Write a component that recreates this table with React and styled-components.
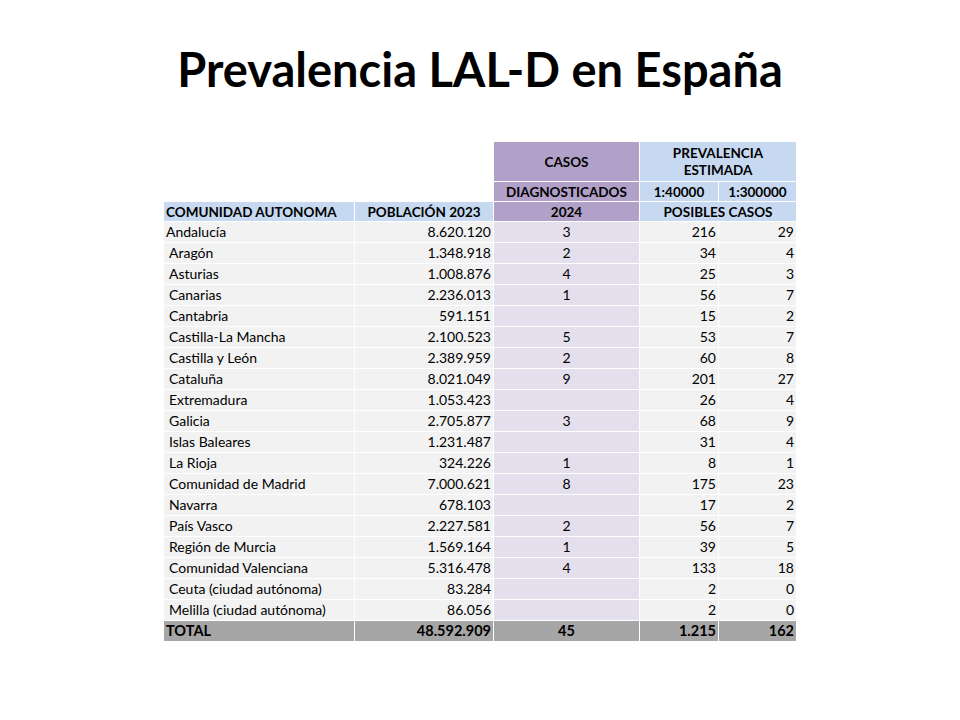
import React from "react";
import styled, { createGlobalStyle } from "styled-components";

const GlobalStyle = createGlobalStyle`
  html, body {
    margin: 0;
    padding: 0;
    background: #ffffff;
  }
  body {
    font-family: Lato, "Open Sans", "Liberation Sans", sans-serif;
    color: #000;
  }
`;

const Slide = {
  Wrapper: styled.div`
    width: 960px;
    height: 720px;
    display: flex;
    flex-direction: column;
    align-items: center;
    box-sizing: border-box;
    padding-top: 37px;
  `,
  Title: styled.h1`
    margin: 0;
    font-family: Lato, "Open Sans", sans-serif;
    font-weight: 700;
    font-size: 47px;
    line-height: 64px;
    letter-spacing: 0;
  `,
  Table: styled.table`
    margin-top: 40px;
    border-collapse: collapse;
    table-layout: fixed;
    font-size: 14px;
  `,
};

const bg = {
  none: "transparent",
  blue: "#c6d9f0",
  purple: "#b1a0c7",
  lavender: "#e4dfec",
  gray: "#f2f2f2",
  total: "#a6a6a6",
};

const Cell = styled.td`
  border: 1px solid #ffffff;
  padding: 0 2px 0 ${(p) => (p.$indent ? "5px" : "2px")};
  height: ${(p) => p.$h || 20}px;
  line-height: ${(p) => p.$lh || 14}px;
  background: ${(p) => bg[p.$bg || "gray"]};
  text-align: ${(p) => p.$align || "left"};
  font-weight: ${(p) => (p.$bold ? 700 : 400)};
  font-size: ${(p) => p.$size || 14}px;
  white-space: nowrap;
  vertical-align: middle;
  box-sizing: border-box;
`;

const Head = (props) => <Cell $bold $size={13.5} {...props} />;

const rows = [
  ["Andalucía", "8.620.120", "3", "216", "29", false],
  ["Aragón", "1.348.918", "2", "34", "4", true],
  ["Asturias", "1.008.876", "4", "25", "3", true],
  ["Canarias", "2.236.013", "1", "56", "7", true],
  ["Cantabria", "591.151", "", "15", "2", true],
  ["Castilla-La Mancha", "2.100.523", "5", "53", "7", true],
  ["Castilla y León", "2.389.959", "2", "60", "8", true],
  ["Cataluña", "8.021.049", "9", "201", "27", true],
  ["Extremadura", "1.053.423", "", "26", "4", true],
  ["Galicia", "2.705.877", "3", "68", "9", true],
  ["Islas Baleares", "1.231.487", "", "31", "4", true],
  ["La Rioja", "324.226", "1", "8", "1", true],
  ["Comunidad de Madrid", "7.000.621", "8", "175", "23", true],
  ["Navarra", "678.103", "", "17", "2", true],
  ["País Vasco", "2.227.581", "2", "56", "7", true],
  ["Región de Murcia", "1.569.164", "1", "39", "5", true],
  ["Comunidad Valenciana", "5.316.478", "4", "133", "18", true],
  ["Ceuta (ciudad autónoma)", "83.284", "", "2", "0", true],
  ["Melilla (ciudad autónoma)", "86.056", "", "2", "0", true],
];

export default function App() {
  return (
    <>
      <GlobalStyle />
      <Slide.Wrapper>
        <Slide.Title>Prevalencia LAL-D en España</Slide.Title>
        <Slide.Table>
          <colgroup>
            <col style={{ width: 191 }} />
            <col style={{ width: 139 }} />
            <col style={{ width: 146 }} />
            <col style={{ width: 79 }} />
            <col style={{ width: 78 }} />
          </colgroup>
          <tbody>
            <tr>
              <Cell $bg="none" $h={40} />
              <Cell $bg="none" $h={40} />
              <Head $bg="purple" $h={40} $align="center">
                CASOS
              </Head>
              <Head $bg="blue" $h={40} $lh={17} $align="center" colSpan={2}>
                PREVALENCIA
                <br />
                ESTIMADA
              </Head>
            </tr>
            <tr>
              <Cell $bg="none" />
              <Cell $bg="none" />
              <Head $bg="purple" $align="center">
                DIAGNOSTICADOS
              </Head>
              <Head $bg="blue" $align="center">
                1:40000
              </Head>
              <Head $bg="blue" $align="center">
                1:300000
              </Head>
            </tr>
            <tr>
              <Head $bg="blue">COMUNIDAD AUTONOMA</Head>
              <Head $bg="blue" $align="center">
                POBLACIÓN 2023
              </Head>
              <Head $bg="purple" $align="center">
                2024
              </Head>
              <Head $bg="blue" $align="center" colSpan={2}>
                POSIBLES CASOS
              </Head>
            </tr>
            {rows.map(([name, pop, cases, p1, p2, indent]) => (
              <tr key={name}>
                <Cell $h={21} $indent={indent}>
                  {name}
                </Cell>
                <Cell $h={21} $align="right">
                  {pop}
                </Cell>
                <Cell $h={21} $bg="lavender" $align="center">
                  {cases}
                </Cell>
                <Cell $h={21} $align="right">
                  {p1}
                </Cell>
                <Cell $h={21} $align="right">
                  {p2}
                </Cell>
              </tr>
            ))}
            <tr>
              <Cell $h={21} $bg="total" $bold $size={14.5}>
                TOTAL
              </Cell>
              <Cell $h={21} $bg="total" $align="right" $bold $size={14.5}>
                48.592.909
              </Cell>
              <Cell $h={21} $bg="total" $align="center" $bold $size={14.5}>
                45
              </Cell>
              <Cell $h={21} $bg="total" $align="right" $bold $size={14.5}>
                1.215
              </Cell>
              <Cell $h={21} $bg="total" $align="right" $bold $size={14.5}>
                162
              </Cell>
            </tr>
          </tbody>
        </Slide.Table>
      </Slide.Wrapper>
    </>
  );
}
